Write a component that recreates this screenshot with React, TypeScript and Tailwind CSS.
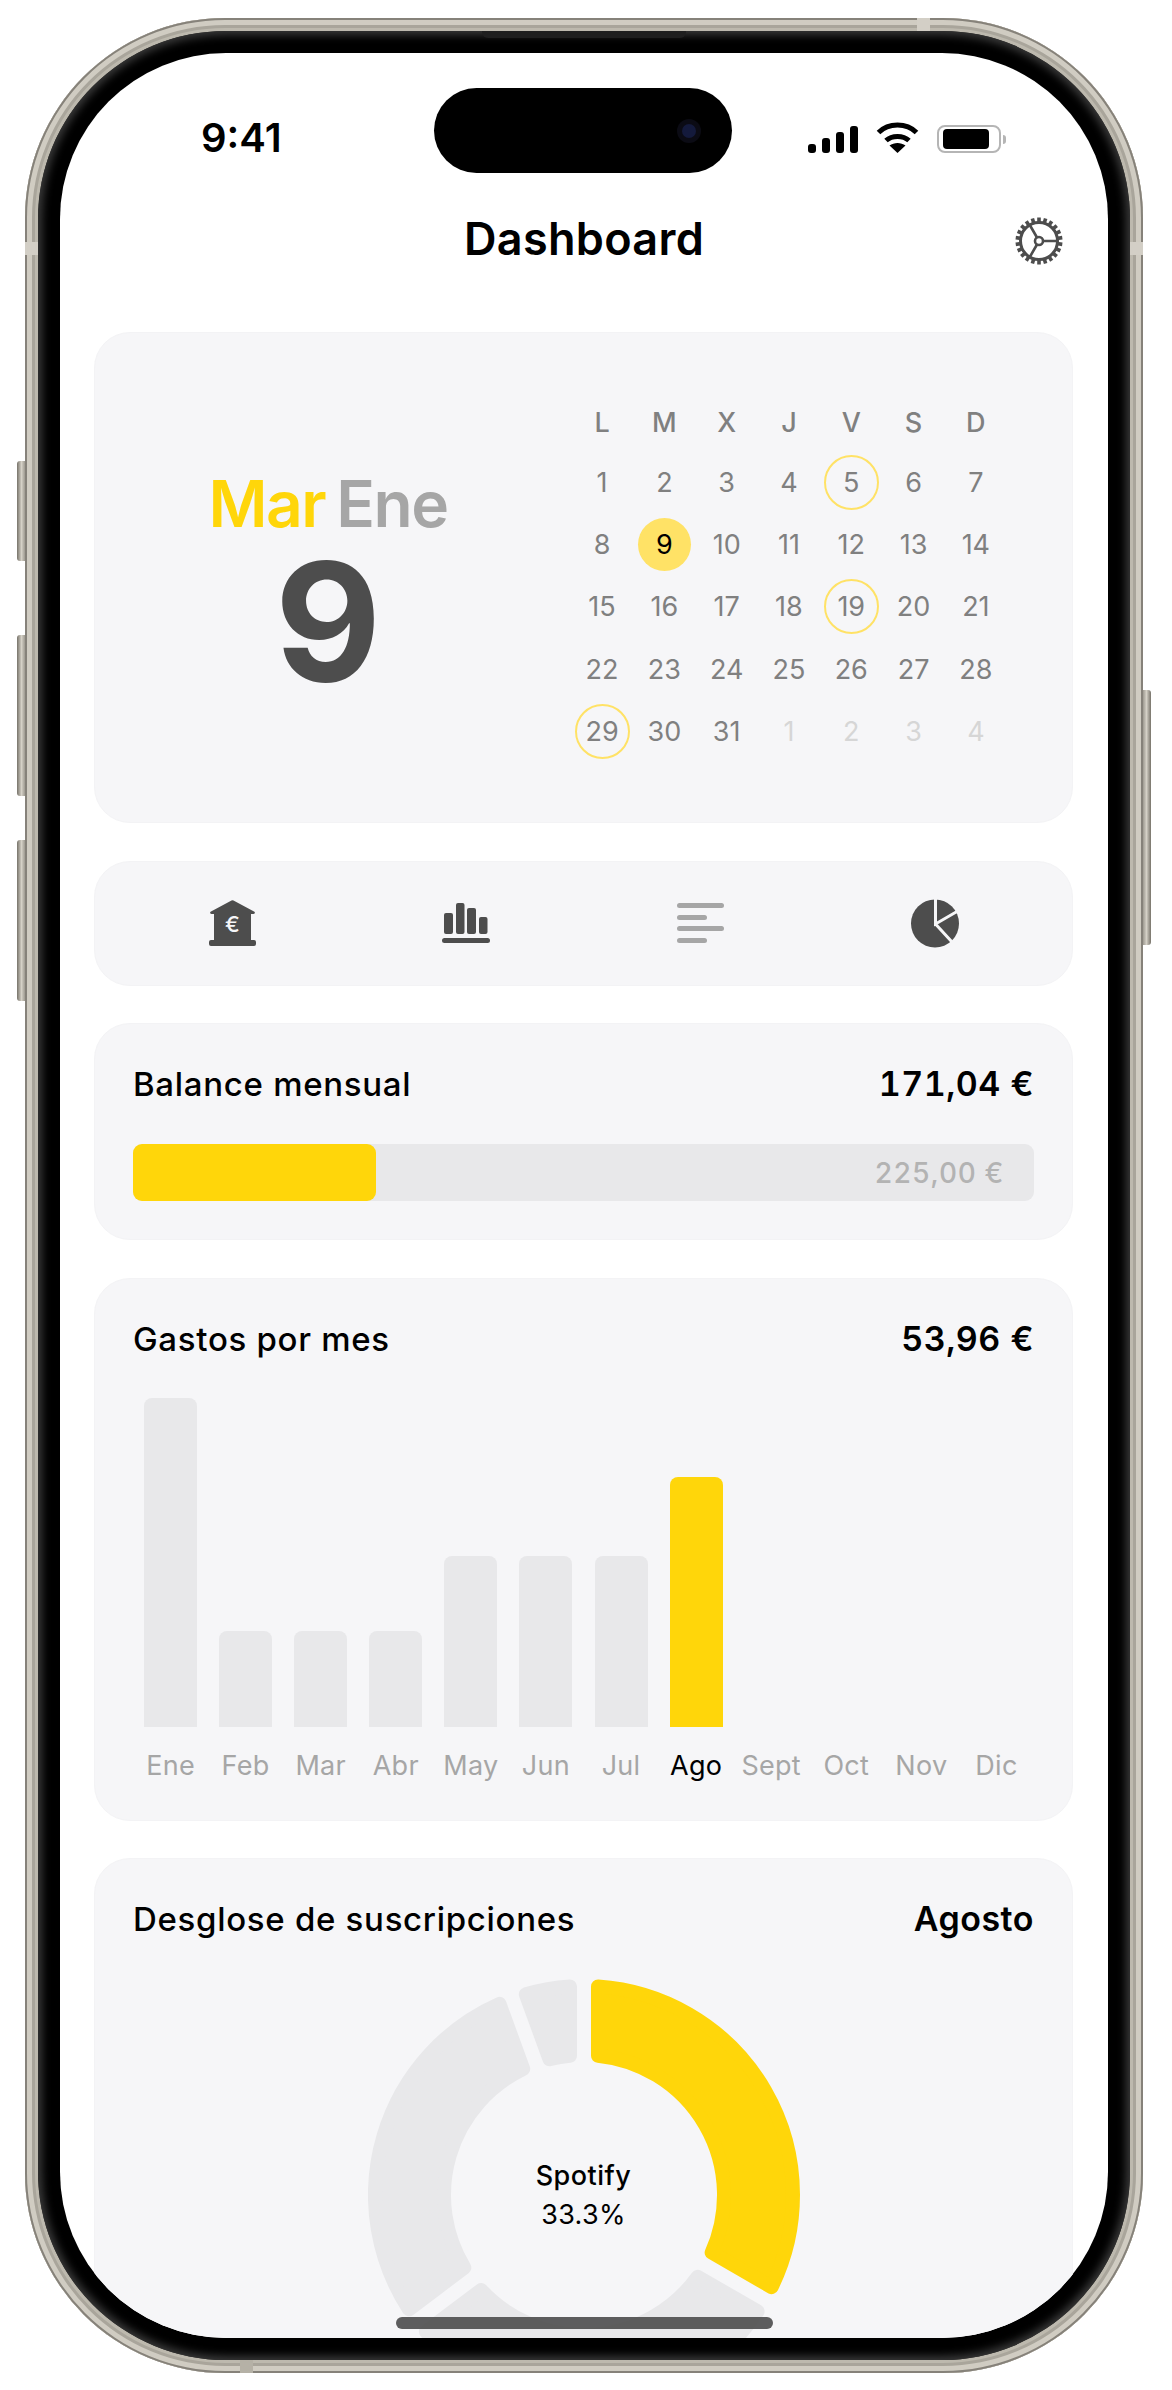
import React from 'react';

const weekDays = ['L', 'M', 'X', 'J', 'V', 'S', 'D'];
const ringed = [5, 19, 29];
const monthDays = Array.from({ length: 31 }, (_, i) => i + 1);
const nextDays = [1, 2, 3, 4];

const months = [
  { name: 'Ene', h: 329 },
  { name: 'Feb', h: 96 },
  { name: 'Mar', h: 96 },
  { name: 'Abr', h: 96 },
  { name: 'May', h: 171 },
  { name: 'Jun', h: 171 },
  { name: 'Jul', h: 171 },
  { name: 'Ago', h: 250, active: true },
  { name: 'Sept', h: 0 },
  { name: 'Oct', h: 0 },
  { name: 'Nov', h: 0 },
  { name: 'Dic', h: 0 },
];

// angles in degrees, clockwise from 12 o'clock
const segments = [
  { from: 0, to: 120, color: '#ffd60a' },
  { from: 120, to: 233, color: '#e8e8ea' },
  { from: 233, to: 340, color: '#e8e8ea' },
  { from: 340, to: 360, color: '#e8e8ea' },
];

function polar(cx: number, cy: number, radius: number, deg: number) {
  const rad = (deg * Math.PI) / 180;
  return `${(cx + radius * Math.sin(rad)).toFixed(2)} ${(cy - radius * Math.cos(rad)).toFixed(2)}`;
}

function sectorPath(from: number, to: number) {
  const c = 216;
  const outer = 209;
  const inner = 140;
  const off = 14;
  const oa = (Math.asin(off / outer) * 180) / Math.PI;
  const ia = (Math.asin(off / inner) * 180) / Math.PI;
  const large = to - from > 180 ? 1 : 0;
  return [
    `M${polar(c, c, outer, from + oa)}`,
    `A${outer} ${outer} 0 ${large} 1 ${polar(c, c, outer, to - oa)}`,
    `L${polar(c, c, inner, to - ia)}`,
    `A${inner} ${inner} 0 ${large} 0 ${polar(c, c, inner, from + ia)}`,
    'Z',
  ].join(' ');
}

function GearIcon() {
  const teeth = Array.from({ length: 22 }, (_, i) => (i * 360) / 22);
  return (
    <svg width="48" height="48" viewBox="0 0 48 48" fill="none" stroke="#4d4d4d">
      <circle cx="24" cy="24" r="18.5" strokeWidth="3" />
      {teeth.map((deg) => (
        <rect key={deg} x="22.2" y="0.5" width="3.6" height="5.5" fill="#4d4d4d" stroke="none" transform={`rotate(${deg} 24 24)`} />
      ))}
      <circle cx="24" cy="24" r="4" strokeWidth="2.6" />
      <path d="M28 24H43M22 20.5 14.5 7.5M22 27.5 14.5 40.5" strokeWidth="2.6" />
    </svg>
  );
}

function BankIcon() {
  return (
    <svg width="47" height="46" viewBox="0 0 47 46">
      <path
        d="M22.5.5a2 2 0 0 1 2 0L45 11.500c1.500.8 1 2.500-.5 2.500H42v26h3a2 2 0 0 1 2 2v2a2 2 0 0 1-2 2H2a2 2 0 0 1-2-2v-2a2 2 0 0 1 2-2h3V14H2.500C1 14 .5 12.300 2 11.500z"
        fill="#4d4d4d"
      />
      <text x="23.500" y="32" textAnchor="middle" fontSize="22" fontWeight="500" fill="#f6f6f8" fontFamily="Inter, sans-serif">
        €
      </text>
    </svg>
  );
}

function BarsIcon() {
  return (
    <svg width="48" height="40" viewBox="0 0 48 40" fill="#4d4d4d">
      <rect x="2" y="10" width="9" height="21" rx="2" />
      <rect x="14" y="0" width="8.500" height="31" rx="2" />
      <rect x="25" y="5" width="9" height="26" rx="2" />
      <rect x="37" y="14" width="8.500" height="17" rx="2" />
      <rect x="0" y="35" width="48" height="5" rx="2.500" />
    </svg>
  );
}

function LinesIcon() {
  return (
    <svg width="47" height="40" viewBox="0 0 47 40" fill="#a6a6a6">
      <rect x="0" y="0" width="47" height="5" rx="2.500" />
      <rect x="0" y="12" width="30" height="5" rx="2.500" />
      <rect x="0" y="23" width="47" height="5" rx="2.500" />
      <rect x="0" y="35" width="30" height="5" rx="2.500" />
    </svg>
  );
}

function PieIcon() {
  return (
    <svg width="48" height="49" viewBox="0 0 48 49">
      <circle cx="24" cy="24.500" r="24" fill="#4d4d4d" />
      <path d="M24.500 0V25L46 12.500M24.500 25 41 43" fill="none" stroke="#f6f6f8" strokeWidth="3" />
    </svg>
  );
}

function StatusIcons() {
  return (
    <div className="flex items-end gap-[18px]">
      <svg width="50" height="27" viewBox="0 0 50 27" fill="#000">
        <rect x="0" y="18" width="8" height="9" rx="3" />
        <rect x="14" y="12" width="8" height="15" rx="3" />
        <rect x="28" y="6" width="8" height="21" rx="3" />
        <rect x="42" y="0" width="8" height="27" rx="3" />
      </svg>
      <svg width="43" height="31" viewBox="0 0 43 31" fill="none" stroke="#000" strokeWidth="5">
        <path d="M2.500 10.500C12.500 .5 30.500 .5 40.500 10.500" />
        <path d="M10 18.500C16 13 27 13 33 18.500" />
        <path d="M21.500 31 13.500 23.500C18 20 25 20 29.500 23.500Z" fill="#000" stroke="none" />
      </svg>
      <div className="flex items-center gap-[2px]">
        <div className="flex h-[28px] w-[64px] items-center rounded-[8px] border-2 border-[#b5b5b5] px-[4px]">
          <div className="h-[20px] w-[46px] rounded-[4px] bg-black" />
        </div>
        <div className="h-[9px] w-[3px] rounded-r-full bg-[#b5b5b5]" />
      </div>
    </div>
  );
}

function CardHeader({ title, value }: { title: string; value: string }) {
  return (
    <div className="flex items-center justify-between text-black">
      <span className="text-[33px] font-[450] leading-[40px] tracking-[0.7px]">{title}</span>
      <span className="text-[34px] font-semibold tabular-nums leading-[40px] tracking-[0.5px]">{value}</span>
    </div>
  );
}

function Card({ className, children }: { className: string; children: React.ReactNode }) {
  return <section className={`rounded-[36px] border border-[#f3f3f5] bg-[#f6f6f8] ${className}`}>{children}</section>;
}

export default function App() {
  return (
    <div className="relative h-[2390px] w-[1172px] overflow-hidden bg-white pl-[25px] pt-[18px] font-['Inter',sans-serif]">
      {/* side buttons */}
      <div className="absolute left-[17px] top-[461px] h-[100px] w-[9px] rounded-l-[3px] bg-gradient-to-r from-[#77736a] via-[#d5d1c7] to-[#8f8b82]" />
      <div className="absolute left-[17px] top-[635px] h-[161px] w-[9px] rounded-l-[3px] bg-gradient-to-r from-[#77736a] via-[#d5d1c7] to-[#8f8b82]" />
      <div className="absolute left-[17px] top-[840px] h-[161px] w-[9px] rounded-l-[3px] bg-gradient-to-r from-[#77736a] via-[#d5d1c7] to-[#8f8b82]" />
      <div className="absolute left-[1142px] top-[690px] h-[255px] w-[9px] rounded-r-[3px] bg-gradient-to-l from-[#77736a] via-[#d5d1c7] to-[#8f8b82]" />

      {/* metal frame */}
      <div className="relative h-[2355px] w-[1118px] rounded-[200px] bg-[#bdb9ae] p-[13px] shadow-[inset_0_0_0_2px_#86827a,inset_0_0_0_7px_#d0ccc2,inset_0_0_0_10px_#a9a59b]">
        <div className="absolute left-[892px] top-0 h-[13px] w-[13px] bg-[#d3cfc6]" />
        <div className="absolute left-0 top-[224px] h-[13px] w-[13px] bg-[#d3cfc6]" />
        <div className="absolute right-0 top-[224px] h-[13px] w-[13px] bg-[#d3cfc6]" />
        <div className="absolute bottom-0 left-[215px] h-[13px] w-[13px] bg-[#b5b1a6]" />

        {/* black bezel */}
        <div className="relative h-full w-full rounded-[188px] bg-black p-[22px] shadow-[inset_0_0_8px_4px_#3a3a3a]">
          <div className="absolute left-[444px] top-0 h-[7px] w-[204px] rounded-b-[6px] bg-[#1f1f1f]" />

          {/* screen */}
          <div className="relative h-full w-full overflow-hidden rounded-[166px] bg-white">
            {/* dynamic island */}
            <div className="absolute left-[374px] top-[35px] flex h-[85px] w-[298px] items-center justify-end rounded-full bg-black pr-[31px]">
              <div className="flex h-[24px] w-[24px] items-center justify-center rounded-full bg-[#0b0b14]">
                <div className="h-[14px] w-[14px] rounded-full bg-[#141a3c]" />
              </div>
            </div>

            <div className="flex h-[100px] items-end justify-between pl-[141px] pr-[102px]">
              <span className="relative top-[5px] text-[40px] font-semibold leading-[40px] text-black">9:41</span>
              <StatusIcons />
            </div>

            <header className="relative mt-[62px] flex h-[48px] items-center justify-center">
              <h1 className="text-[45px] font-semibold leading-[48px] tracking-[0.3px] text-black">Dashboard</h1>
              <div className="absolute right-[45px] top-[2px]">
                <GearIcon />
              </div>
            </header>

            <main className="mt-[69px] flex flex-col gap-[37.5px] pl-[34px] pr-[35px]">
              <Card className="flex h-[491px] items-center justify-between pl-[113px] pr-[65px]">
                <div className="flex w-[240px] flex-col items-center pt-[8px]">
                  <div className="flex items-baseline gap-[11px] text-[64px] font-semibold leading-[76px] tracking-[-1.5px]">
                    <span className="text-[#ffd60a]">Mar</span>
                    <span className="text-[#a6a6a6]">Ene</span>
                  </div>
                  <div className="mt-[5px] text-[164px] font-bold leading-[150px] text-[#4d4d4d]">9</div>
                </div>

                <div className="grid grid-cols-[repeat(7,62.3px)] grid-rows-[57px] auto-rows-[62.3px] pt-[2px] text-center text-[27px] leading-none text-[#808080]">
                  {weekDays.map((d) => (
                    <div key={d} className="flex items-center justify-center font-medium">
                      {d}
                    </div>
                  ))}
                  {monthDays.map((d) => (
                    <div key={d} className="flex items-center justify-center">
                      {d === 9 ? (
                        <span className="flex h-[53px] w-[53px] items-center justify-center rounded-full bg-[#ffe266] text-black">9</span>
                      ) : ringed.includes(d) ? (
                        <span className="flex h-[55px] w-[55px] items-center justify-center rounded-full border-2 border-[#ffe266]">{d}</span>
                      ) : (
                        d
                      )}
                    </div>
                  ))}
                  {nextDays.map((d) => (
                    <div key={d} className="flex items-center justify-center text-[#d6d6d6]">
                      {d}
                    </div>
                  ))}
                </div>
              </Card>

              <Card className="grid h-[125px] grid-cols-4 items-center px-[20px]">
                <div className="flex justify-center">
                  <BankIcon />
                </div>
                <div className="flex justify-center">
                  <BarsIcon />
                </div>
                <div className="flex justify-center">
                  <LinesIcon />
                </div>
                <div className="flex justify-center">
                  <PieIcon />
                </div>
              </Card>

              <Card className="h-[217px] px-[38px] pt-[40px]">
                <CardHeader title="Balance mensual" value="171,04 €" />
                <div className="mt-[40px] flex h-[57px] items-center justify-between rounded-[9px] bg-[#e8e8ea] pr-[30px]">
                  <div className="h-full w-[243px] rounded-[9px] bg-[#ffd60a]" />
                  <span className="text-[28px] font-medium tabular-nums tracking-[0.6px] text-[#b3b3b3]">225,00 €</span>
                </div>
              </Card>

              <Card className="h-[543px] px-[38px] pt-[40px]">
                <CardHeader title="Gastos por mes" value="53,96 €" />
                <div className="mt-[39px] grid grid-cols-12">
                  {months.map((m) => (
                    <div key={m.name} className="flex h-[329px] items-end justify-center">
                      {m.h > 0 && (
                        <div
                          className={`w-[53px] rounded-t-[8px] ${m.active ? 'bg-[#ffd60a]' : 'bg-[#e8e8ea]'}`}
                          style={{ height: m.h }}
                        />
                      )}
                    </div>
                  ))}
                  {months.map((m) => (
                    <div key={m.name} className={`mt-[23px] text-center text-[27px] leading-[32px] tracking-[0.3px] ${m.active ? 'text-black' : 'text-[#a6a6a6]'}`}>
                      {m.name}
                    </div>
                  ))}
                </div>
              </Card>

              <Card className="h-[620px] px-[38px] pt-[40px]">
                <CardHeader title="Desglose de suscripciones" value="Agosto" />
                <div className="relative mx-auto mt-[40px] h-[432px] w-[432px]">
                  <svg width="432" height="432" viewBox="0 0 432 432" strokeLinejoin="round" strokeWidth="14">
                    {segments.map((s) => (
                      <path key={s.from} d={sectorPath(s.from, s.to)} fill={s.color} stroke={s.color} />
                    ))}
                  </svg>
                  <div className="absolute inset-0 flex flex-col items-center justify-center text-black">
                    <span className="text-[27px] font-medium leading-[39px] tracking-[0.5px]">Spotify</span>
                    <span className="text-[27px] leading-[39px] tracking-[0.3px]">33.3%</span>
                  </div>
                </div>
              </Card>
            </main>

            {/* home indicator */}
            <div className="absolute bottom-[9px] left-[336px] h-[12px] w-[377px] rounded-full bg-[#4d4d4d]/90" />
          </div>
        </div>
      </div>
    </div>
  );
}
